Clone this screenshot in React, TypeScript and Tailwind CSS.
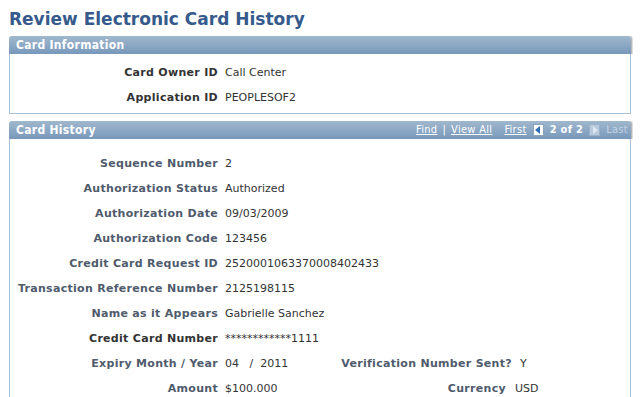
import React from "react";

const font = { fontFamily: "'DejaVu Sans', sans-serif" };
const cond = { fontFamily: "'DejaVu Sans Condensed', 'DejaVu Sans', sans-serif" };

function Row({ label, value, dark }: { label: string; value: string; dark?: boolean }) {
  return (
    <div className="flex h-[25px] items-center">
      <div className={`w-[208px] shrink-0 text-right text-[11px] font-bold tracking-[0.3px] ${dark ? "text-[#333333]" : "text-[#4f5b6c]"}`}>{label}</div>
      <div className="ml-[7px] text-[11px] text-[#333333]">{value}</div>
    </div>
  );
}

function Header({ title, children }: { title: string; children?: React.ReactNode }) {
  return (
    <div className="flex h-[18px] items-center justify-between rounded-t-[3px] bg-gradient-to-b from-[#a0b8cd] to-[#7898bb] pl-[7px] pr-[3px] shadow-[1px_0_0_#b8b8b8,2px_0_0_#dddddd]" style={cond}>
      <span className="text-[12px] font-bold tracking-[0.3px] text-white">{title}</span>
      {children}
    </div>
  );
}

export default function App() {
  return (
    <div className="relative h-[397px] w-[642px] overflow-hidden bg-white" style={font}>
      <div className="pl-[9px] pt-[7px] text-[17px] font-bold leading-[24px] text-[#355a8b]">Review Electronic Card History</div>

      <div className="ml-[9px] mt-[5px] w-[622px]">
        <Header title="Card Information" />
        <div className="border border-t-0 border-[#a8c0d8] pb-[2px] pt-[7px]">
          <Row label="Card Owner ID" value="Call Center" dark />
          <Row label="Application ID" value="PEOPLESOF2" dark />
        </div>
      </div>

      <div className="ml-[9px] mt-[7px] w-[622px]">
        <Header title="Card History">
          <div className="flex items-center text-[11px] tracking-[0.3px] text-white">
            <span className="underline">Find</span>
            <span className="mx-[5px]">|</span>
            <span className="underline">View All</span>
            <span className="ml-[12px] underline">First</span>
            <span className="ml-[6px] flex h-[12px] w-[11px] items-center justify-center border border-[#8aa4c0] bg-white">
              <svg width="6" height="8" viewBox="0 0 6 8"><path d="M5 0 L0 4 L5 8 Z" fill="#2f6fb5" /></svg>
            </span>
            <span className="ml-[6px] font-bold">2 of 2</span>
            <span className="ml-[6px] flex h-[12px] w-[11px] items-center justify-center border border-[#9ab2ca] bg-[#b8cade]">
              <svg width="6" height="8" viewBox="0 0 6 8"><path d="M1 0 L6 4 L1 8 Z" fill="#dde7f1" /></svg>
            </span>
            <span className="ml-[6px] text-[#c2d2e2]">Last</span>
          </div>
        </Header>
        <div className="h-[300px] border border-t-0 border-[#a8c0d8] pt-[13px]">
          <Row label="Sequence Number" value="2" />
          <Row label="Authorization Status" value="Authorized" />
          <Row label="Authorization Date" value="09/03/2009" />
          <Row label="Authorization Code" value="123456" />
          <Row label="Credit Card Request ID" value="2520001063370008402433" />
          <Row label="Transaction Reference Number" value="2125198115" />
          <Row label="Name as it Appears" value="Gabrielle Sanchez" />
          <Row label="Credit Card Number" value="************1111" dark />
          <div className="flex h-[25px] items-center">
            <div className="w-[208px] shrink-0 text-right text-[11px] font-bold tracking-[0.3px] text-[#4f5b6c]">Expiry Month / Year</div>
            <div className="ml-[7px] w-[110px] text-[11px] text-[#333333]">04&nbsp;&nbsp;&nbsp;/&nbsp;&nbsp;2011</div>
            <div className="w-[177px] whitespace-nowrap text-right text-[11px] font-bold tracking-[0.3px] text-[#4f5b6c]">Verification Number Sent?</div>
            <div className="ml-[8px] text-[11px] text-[#333333]">Y</div>
          </div>
          <div className="flex h-[25px] items-center">
            <div className="w-[208px] shrink-0 text-right text-[11px] font-bold tracking-[0.3px] text-[#4f5b6c]">Amount</div>
            <div className="ml-[7px] w-[110px] text-[11px] text-[#333333]">$100.000</div>
            <div className="w-[171px] text-right text-[11px] font-bold tracking-[0.3px] text-[#4f5b6c]">Currency</div>
            <div className="ml-[9px] text-[11px] text-[#333333]">USD</div>
          </div>
        </div>
      </div>
    </div>
  );
}
